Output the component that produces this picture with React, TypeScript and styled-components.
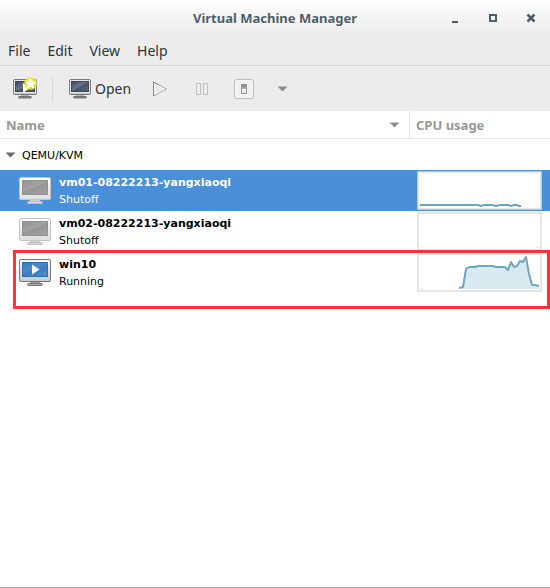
import React from 'react';
import styled, { createGlobalStyle } from 'styled-components';

const GlobalStyle = createGlobalStyle`
  * { box-sizing: border-box; }
  body { margin: 0; background: #fff; }
  button { border: 0; padding: 0; background: none; color: inherit; font: inherit; }
`;

const Window = styled.div`
  display: flex;
  flex-direction: column;
  min-height: 100vh;
  background: #fff;
  border-bottom: 1px solid #a5a5a5;
  color: #2e3436;
  font: 14px/20px 'Noto Sans', 'Open Sans', sans-serif;
`;

const TitleBar = styled.header`
  display: grid;
  grid-template-columns: 1fr auto 1fr;
  align-items: center;
  height: 36px;
  padding-right: 10px;
  background: linear-gradient(#fefefe, #ececec 34px);
  color: #4c5f68;
`;

const Title = styled.h1`
  grid-column: 2;
  margin: 0 0 0 10px;
  font-size: 13px;
  font-weight: 700;
  line-height: 20px;
  text-shadow: 0 1px #fff;
`;

const WindowControls = styled.div`
  display: flex;
  justify-content: flex-end;
  gap: 20px;
`;

const ControlButton = styled.button`
  display: flex;
  align-items: center;
  justify-content: center;
  width: 18px;
  height: 18px;
`;

const MenuBar = styled.nav`
  display: flex;
  gap: 17px;
  height: 30px;
  padding: 0 8px;
  background: #ececec;
  border-bottom: 1px solid #d2d2d2;
`;

const MenuButton = styled.button`
  height: 29px;
  line-height: 30px;
`;

const ToolBar = styled.div`
  display: flex;
  align-items: center;
  height: 45px;
  padding: 0 8px 0 12px;
  background: #ececec;
`;

const ToolButton = styled.button<{ $width: number }>`
  display: flex;
  align-items: center;
  justify-content: center;
  gap: 4px;
  width: ${(p) => p.$width}px;
  height: 32px;
`;

const ToolSeparator = styled.div`
  width: 1px;
  height: 24px;
  margin: 0 14px;
  background: #d6d6d6;
`;

const MachineTable = styled.table`
  width: 100%;
  border-collapse: separate;
  border-spacing: 0;
  table-layout: fixed;
  color: #000;
  font: 11px/17px 'DejaVu Sans', sans-serif;
`;

const CpuColumn = styled.col`
  width: 140px;
`;

const HeadCell = styled.th<{ $divided?: boolean }>`
  height: 28px;
  padding: 0 9px 0 6px;
  border-bottom: 1px solid #e6e6e6;
  border-right: ${(p) => (p.$divided ? '1px solid #e6e6e6' : '0')};
`;

const HeadButton = styled.button`
  display: flex;
  align-items: center;
  justify-content: space-between;
  width: 100%;
  height: 27px;
  color: #959898;
  font: 700 13px/20px 'Noto Sans', sans-serif;
`;

const GroupCell = styled.td`
  height: 31px;
  padding: 1px 5px 0;
`;

const GroupButton = styled.button`
  display: flex;
  align-items: center;
  gap: 6px;
`;

const MachineRow = styled.tr<{ $selected?: boolean }>`
  height: 41px;
  background: ${(p) => (p.$selected ? '#4a90d9' : '#fff')};
  color: ${(p) => (p.$selected ? '#fff' : '#000')};
`;

const NameCell = styled.td`
  padding: 0 0 0 19px;
`;

const Machine = styled.div`
  display: flex;
  align-items: center;
  gap: 8px;
`;

const MachineName = styled.div`
  font-weight: 700;
`;

const GraphCell = styled.td`
  padding: 0 0 0 7px;
`;

const Graph = styled.svg`
  display: block;
`;

const HighlightAnchor = styled.div`
  position: relative;
`;

const Highlight = styled.div`
  position: absolute;
  left: 13px;
  right: 0;
  bottom: -16px;
  height: 59px;
  border: 3px solid #f83538;
  pointer-events: none;
`;

function Arrow({ color = '#8b8e8f' }: { color?: string }) {
  return (
    <svg width="11" height="6" viewBox="0 0 11 6" aria-hidden="true">
      <path d="M.5.5h10l-5 5z" fill={color} />
    </svg>
  );
}

function ConsoleIcon({ fresh = false }: { fresh?: boolean }) {
  const id = fresh ? 'fresh' : 'open';
  return (
    <svg width={fresh ? 26 : 22} height="24" viewBox={fresh ? '0 0 26 24' : '0 0 22 24'} aria-hidden="true">
      <defs>
        <linearGradient id={`console-${id}`} x1="0" y1="0" x2="1" y2="1">
          <stop offset="0" stopColor="#35425a" />
          <stop offset=".45" stopColor="#69778c" />
          <stop offset=".55" stopColor="#46546b" />
          <stop offset="1" stopColor="#55647b" />
        </linearGradient>
        <radialGradient id={`glow-${id}`}>
          <stop offset=".45" stopColor="#eef02b" />
          <stop offset=".8" stopColor="#e5e82b" stopOpacity=".85" />
          <stop offset="1" stopColor="#e5e82b" stopOpacity="0" />
        </radialGradient>
      </defs>
      <g transform={fresh ? 'translate(1 0)' : undefined}>
        <rect x=".5" y="2.5" width={fresh ? 23 : 21} height="15" rx="1" fill="#e8e8e6" stroke="#777a76" />
        <path d={fresh ? 'M1 16.5h22' : 'M1 16.5h20'} stroke="#c4c5c2" />
        <rect x="2.5" y="4.5" width={fresh ? 19 : 17} height="10" fill={`url(#console-${id})`} stroke="#3d485b" />
        <path d={fresh ? 'M8 18h8v2H8z' : 'M7 18h8v2H7z'} fill="#b4b5b2" />
        <rect x={fresh ? 5.5 : 4.5} y="19.5" width="13" height="1.5" rx=".7" fill="#8a8b89" stroke="#70726f" />
      </g>
      {fresh && (
        <>
          <path d="M11 6v10l7-5z" fill="#fff" />
          <circle cx="18.5" cy="6.5" r="7" fill="url(#glow-fresh)" />
          <path d="m18.5 1 1.7 3.6 4.1.4-3.1 2.7 1 4.1-3.7-2.2-3.6 2.2 1-4.1L12.800 5l4.1-.4z" fill="#fff" />
        </>
      )}
    </svg>
  );
}

function PlayIcon() {
  return (
    <svg width="16" height="18" viewBox="0 0 16 18" aria-hidden="true">
      <path d="M1.5 2v14l13-7z" fill="#e9ebe7" stroke="#a2a4a0" strokeLinejoin="round" />
      <path d="M1.5 16V2l5 2.700" fill="none" stroke="#858783" />
      <path d="M2.800 4v10l9.500-5z" fill="none" stroke="#fafbf9" />
    </svg>
  );
}

function PauseIcon() {
  return (
    <svg width="14" height="14" viewBox="0 0 14 14" aria-hidden="true">
      <g fill="#ebebe9" stroke="#c0c1be">
        <rect x="1.5" y="1.5" width="4" height="11" />
        <rect x="8.5" y="1.5" width="4" height="11" />
      </g>
      <path d="M3.5 3v8m7-8v8" stroke="#f4f4f3" />
    </svg>
  );
}

function PowerIcon() {
  return (
    <svg width="20" height="20" viewBox="0 0 20 20" aria-hidden="true">
      <defs>
        <linearGradient id="power" x2="0" y2="1">
          <stop stopColor="#777" />
          <stop offset=".5" stopColor="#bbb" />
          <stop offset=".55" stopColor="#f7f7f7" />
          <stop offset="1" stopColor="#ddd" />
        </linearGradient>
      </defs>
      <rect x=".5" y=".5" width="19" height="19" rx="2" fill="#ededed" stroke="#bcbcbc" />
      <rect x="2" y="2" width="16" height="16" rx="1" fill="#f0f0f0" stroke="#fafafa" />
      <rect x="7.5" y="5.5" width="5" height="9" fill="url(#power)" stroke="#999" />
    </svg>
  );
}

function MachineIcon({ running = false }: { running?: boolean }) {
  const id = running ? 'on' : 'off';
  return (
    <svg width="32" height="28" viewBox="0 0 32 28" aria-hidden="true">
      <defs>
        <linearGradient id={`screen-${id}`} x2=".7" y2="1">
          <stop stopColor={running ? '#377cb9' : '#909090'} />
          <stop offset=".5" stopColor={running ? '#4c8dc8' : '#a3a3a3'} />
          <stop offset=".6" stopColor={running ? '#3b7cb9' : '#969696'} />
          <stop offset="1" stopColor={running ? '#4a8bc4' : '#a1a1a1'} />
        </linearGradient>
        <linearGradient id={`frame-${id}`} x2="0" y2="1">
          <stop stopColor="#fff" />
          <stop offset="1" stopColor={running ? '#c9c9c9' : '#dedede'} />
        </linearGradient>
      </defs>
      <rect x=".5" y=".5" width="31" height="22" rx="1.5" fill={`url(#frame-${id})`} stroke={running ? '#777' : '#c4c4c4'} />
      <rect x="3.5" y="3.5" width="25" height="14" fill={`url(#screen-${id})`} stroke={running ? '#326fa6' : '#929292'} />
      <path d="M11 23h10v2H11z" fill={running ? '#999' : '#d1d1d1'} />
      <rect x="8.5" y="24.5" width="15" height="2" rx="1" fill={running ? '#aaa' : '#ddd'} stroke={running ? '#777' : '#bbb'} />
      {running && <path d="M13 5.5v10l7.5-5z" fill="#fff" />}
    </svg>
  );
}

function CpuGraph({ label, points, filled }: { label: string; points?: string; filled?: boolean }) {
  return (
    <Graph width="125" height="39" viewBox="0 0 125 39" role="img" aria-label={label}>
      <rect x="1" y="1" width="123" height="37" fill="#fff" stroke="#dfdbdd" strokeWidth="1.5" />
      <path d="M3 35.5h3m113 0h3" stroke="#e3eaea" />
      {filled && <polygon points={`${points} 122,36 42,36`} fill="#d9e9f0" />}
      {points && <polyline points={points} fill="none" stroke="#6fa5bf" strokeWidth="2" strokeLinejoin="round" />}
    </Graph>
  );
}

const idle = '3,34 61,34 64,35 67,34 75,34 79,35 83,34 91,34 94,35 97,34 100,34 102,35 104,35';
const load =
  '42,35 46,34 49,16 52,14 58,14 61,13 76,13 79,14 88,14 91,17 94,9 97,14 100,13 103,8 106,9 109,4 112,21 115,32 118,32 122,33';

const machines = [
  { name: 'vm01-08222213-yangxiaoqi', state: 'Shutoff', selected: true, cpu: idle },
  { name: 'vm02-08222213-yangxiaoqi', state: 'Shutoff' },
  { name: 'win10', state: 'Running', cpu: load },
];

export default function App() {
  return (
    <Window>
      <GlobalStyle />
      <TitleBar>
        <Title>Virtual Machine Manager</Title>
        <WindowControls>
          <ControlButton aria-label="Minimize">
            <svg width="10" height="10"><path d="M2 8h6v2H2z" fill="#4c5f68" /></svg>
          </ControlButton>
          <ControlButton aria-label="Maximize">
            <svg width="10" height="10"><rect x="2" y="2" width="6" height="6" fill="none" stroke="#4c5f68" strokeWidth="2" /></svg>
          </ControlButton>
          <ControlButton aria-label="Close">
            <svg width="10" height="10"><path d="m1.5 1.5 7 7m0-7-7 7" stroke="#4c5f68" strokeWidth="2.5" /></svg>
          </ControlButton>
        </WindowControls>
      </TitleBar>
      <MenuBar aria-label="Menu">
        {['File', 'Edit', 'View', 'Help'].map((m) => (
          <MenuButton key={m}>{m}</MenuButton>
        ))}
      </MenuBar>
      <ToolBar role="toolbar">
        <ToolButton $width={26} aria-label="New machine"><ConsoleIcon fresh /></ToolButton>
        <ToolSeparator />
        <ToolButton $width={66}><ConsoleIcon />Open</ToolButton>
        <ToolButton $width={54} aria-label="Run"><PlayIcon /></ToolButton>
        <ToolButton $width={30} aria-label="Pause"><PauseIcon /></ToolButton>
        <ToolButton $width={54} aria-label="Shut down"><PowerIcon /></ToolButton>
        <ToolButton $width={22} aria-label="Shut down options"><Arrow /></ToolButton>
      </ToolBar>
      <HighlightAnchor>
        <MachineTable>
          <colgroup>
            <col />
            <CpuColumn />
          </colgroup>
          <thead>
            <tr>
              <HeadCell $divided><HeadButton>Name<Arrow /></HeadButton></HeadCell>
              <HeadCell><HeadButton>CPU usage</HeadButton></HeadCell>
            </tr>
          </thead>
          <tbody>
            <tr>
              <GroupCell colSpan={2}>
                <GroupButton aria-expanded="true"><Arrow color="#686b6c" />QEMU/KVM</GroupButton>
              </GroupCell>
            </tr>
            {machines.map((m) => (
              <MachineRow key={m.name} $selected={m.selected}>
                <NameCell>
                  <Machine>
                    <MachineIcon running={m.state === 'Running'} />
                    <div>
                      <MachineName>{m.name}</MachineName>
                      <div>{m.state}</div>
                    </div>
                  </Machine>
                </NameCell>
                <GraphCell>
                  <CpuGraph label={`${m.name} CPU usage`} points={m.cpu} filled={m.state === 'Running'} />
                </GraphCell>
              </MachineRow>
            ))}
          </tbody>
        </MachineTable>
        <Highlight />
      </HighlightAnchor>
    </Window>
  );
}
